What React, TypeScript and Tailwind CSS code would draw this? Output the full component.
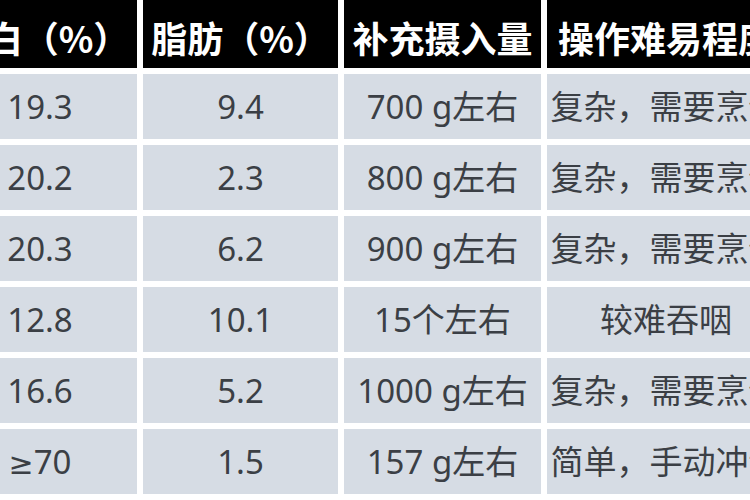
const header = ["蛋白（%）", "脂肪（%）", "补充摄入量", "操作难易程度"];

const rows = [
  ["19.3", "9.4", "700 g左右", "复杂，需要烹饪"],
  ["20.2", "2.3", "800 g左右", "复杂，需要烹饪"],
  ["20.3", "6.2", "900 g左右", "复杂，需要烹饪"],
  ["12.8", "10.1", "15个左右", "较难吞咽"],
  ["16.6", "5.2", "1000 g左右", "复杂，需要烹饪"],
  ["≥70", "1.5", "157 g左右", "简单，手动冲调"],
];

function Cell({ text }: { text: string }) {
  if (text.startsWith("≥")) {
    return (
      <span>
        <span className="font-['DejaVu_Sans',sans-serif] text-[30px]">≥</span>
        {text.slice(1)}
      </span>
    );
  }
  return <span>{text}</span>;
}

export default function App() {
  return (
    <div className="w-[750px] h-[500px] overflow-hidden bg-white">
      <div className="ml-[-57px] grid grid-cols-[194px_195px_197px_238px] gap-[6px] w-max font-['Noto_Sans','Noto_Sans_CJK_SC',sans-serif]">
        {header.map((h, i) => (
          <div
            key={i}
            className="h-[68px] bg-black flex items-center justify-center pt-[5px] whitespace-nowrap overflow-hidden text-white font-bold text-[36px] font-['Noto_Sans_CJK_SC',sans-serif]"
          >
            {h}
          </div>
        ))}
        {rows.map((r, ri) =>
          r.map((c, ci) => (
            <div
              key={`${ri}-${ci}`}
              className="h-[65px] bg-[#d6dce4] flex items-center justify-center whitespace-nowrap overflow-hidden text-[33px] text-[#3b3f45]"
            >
              <Cell text={c} />
            </div>
          ))
        )}
      </div>
    </div>
  );
}
